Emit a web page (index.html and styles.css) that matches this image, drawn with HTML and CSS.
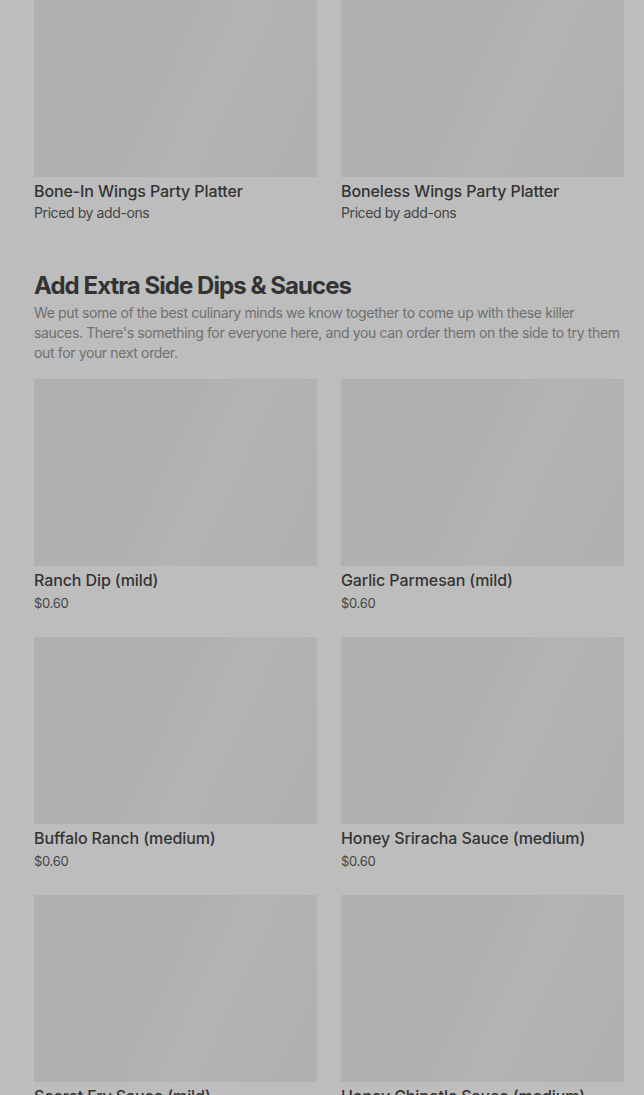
FILE: index.html
```html
<!DOCTYPE html>
<html>
<head>
<meta charset="utf-8">
<link rel="stylesheet" href="styles.css">
</head>
<body>
<main class="page">
  <section class="grid first">
    <div class="card">
      <div class="thumb"></div>
      <div class="title">Bone-In Wings Party Platter</div>
      <div class="sub">Priced by add-ons</div>
    </div>
    <div class="card">
      <div class="thumb"></div>
      <div class="title">Boneless Wings Party Platter</div>
      <div class="sub">Priced by add-ons</div>
    </div>
  </section>

  <section class="section">
    <h2 class="heading">Add Extra Side Dips &amp; Sauces</h2>
    <p class="desc">We put some of the best culinary minds we know together to come up with these killer sauces. There's something for everyone here, and you can order them on the side to try them out for your next order.</p>
    <div class="grid">
      <div class="card">
        <div class="thumb"></div>
        <div class="title">Ranch Dip (mild)</div>
        <div class="price">$0.60</div>
      </div>
      <div class="card">
        <div class="thumb"></div>
        <div class="title">Garlic Parmesan (mild)</div>
        <div class="price">$0.60</div>
      </div>
      <div class="card">
        <div class="thumb"></div>
        <div class="title">Buffalo Ranch (medium)</div>
        <div class="price">$0.60</div>
      </div>
      <div class="card">
        <div class="thumb"></div>
        <div class="title">Honey Sriracha Sauce (medium)</div>
        <div class="price">$0.60</div>
      </div>
      <div class="card">
        <div class="thumb"></div>
        <div class="title">Secret Fry Sauce (mild)</div>
        <div class="price">$0.60</div>
      </div>
      <div class="card">
        <div class="thumb"></div>
        <div class="title">Honey Chipotle Sauce (medium)</div>
        <div class="price">$0.60</div>
      </div>
    </div>
  </section>
</main>
</body>
</html>
```

FILE: styles.css
```css
html, body {
  margin: 0;
  padding: 0;
  background: #bdbdbd;
  overflow: hidden;
}
body {
  font-family: "Inter", "Roboto", "Liberation Sans", sans-serif;
  color: #333333;
}
.page {
  padding: 0 20px 0 34px;
  margin-top: -10px;
}
.grid {
  display: grid;
  grid-template-columns: 1fr 1fr;
  column-gap: 24px;
  row-gap: 24px;
}
.thumb {
  height: 187px;
  background: linear-gradient(115deg, #b0b0b0 0%, #b0b0b0 45%, #b4b4b4 60%, #b1b1b1 80%, #b0b0b0 100%);
}
.title {
  margin-top: 3px;
  font-size: 16px;
  line-height: 22px;
  font-weight: 500;
  color: #333333;
  letter-spacing: -0.1px;
}
.sub, .price {
  margin-top: 1px;
  font-size: 14px;
  line-height: 20px;
  color: #444444;
  letter-spacing: -0.4px;
}
.price {
  margin-top: 2px;
  font-size: 13px;
  letter-spacing: -0.3px;
}
.section {
  margin-top: 47px;
}
.heading {
  margin: 0;
  font-size: 24px;
  line-height: 32px;
  font-weight: 700;
  letter-spacing: -0.95px;
  color: #333333;
}
.desc {
  margin: 1px 0 16px;
  max-width: 588px;
  font-size: 14px;
  line-height: 20px;
  color: #707070;
  letter-spacing: -0.36px;
}
```
